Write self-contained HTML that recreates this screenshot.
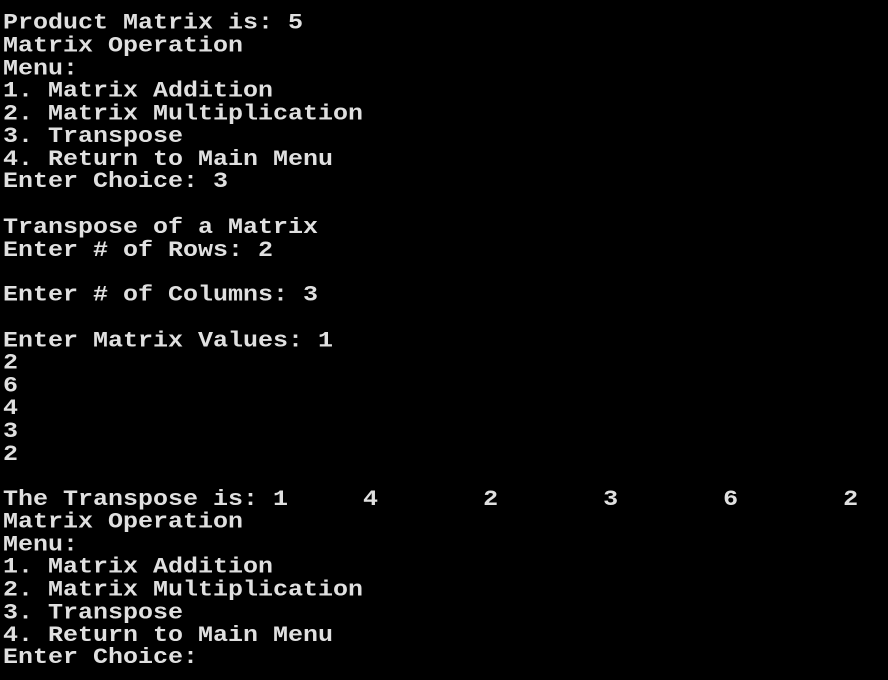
<!DOCTYPE html>
<html><head><meta charset="utf-8"><style>
html,body{margin:0;padding:0;background:#000;width:888px;height:680px;overflow:hidden}
pre{margin:0;position:absolute;left:3px;top:12px;font-family:"Liberation Mono",monospace;font-weight:bold;font-size:25px;line-height:25.77px;color:#e0e0e0;transform:scaleY(0.88);transform-origin:0 0;letter-spacing:0}
</style></head><body><pre>Product Matrix is: 5
Matrix Operation
Menu:
1. Matrix Addition
2. Matrix Multiplication
3. Transpose
4. Return to Main Menu
Enter Choice: 3

Transpose of a Matrix
Enter # of Rows: 2

Enter # of Columns: 3

Enter Matrix Values: 1
2
6
4
3
2

The Transpose is: 1     4       2       3       6       2
Matrix Operation
Menu:
1. Matrix Addition
2. Matrix Multiplication
3. Transpose
4. Return to Main Menu
Enter Choice:</pre></body></html>
